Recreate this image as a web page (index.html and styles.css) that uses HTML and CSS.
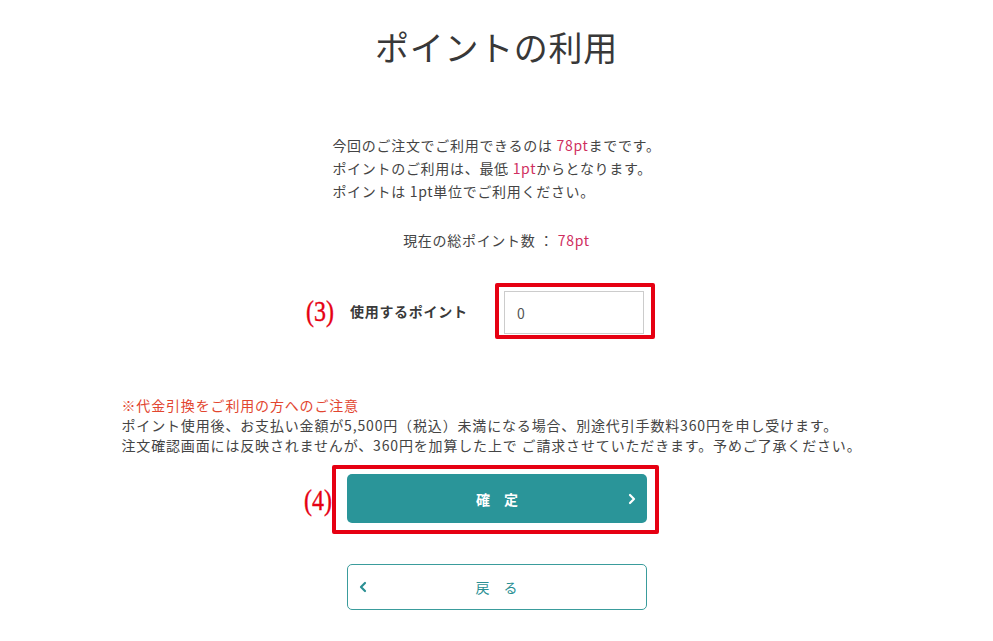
FILE: index.html
```html
<!DOCTYPE html>
<html lang="ja">
<head>
    <meta charset="UTF-8">
    <meta name="viewport" content="width=device-width, initial-scale=1.0">
    <title>ポイントの利用</title>
    <link rel="stylesheet" href="styles.css">
</head>
<body>
    <div class="page">
        <h1>ポイントの利用</h1>

        <div class="intro">
            <p>今回のご注文でご利用できるのは <span class="pt">78pt</span>までです。</p>
            <p>ポイントのご利用は、最低 <span class="pt">1pt</span>からとなります。</p>
            <p>ポイントは 1pt単位でご利用ください。</p>
        </div>

        <p class="total">現在の総ポイント数 ： <span class="pt">78pt</span></p>

        <div class="use-row">
            <label class="use-label" for="use-point">
                <span class="mark mark-3">(3)</span>
                使用するポイント
            </label>
            <div class="frame frame-input">
                <input id="use-point" class="point-input" type="text" value="0">
            </div>
        </div>

        <div class="notice">
            <p class="notice-title">※代金引換をご利用の方へのご注意</p>
            <p>ポイント使用後、お支払い金額が5,500円（税込）未満になる場合、別途代引手数料360円を申し受けます。</p>
            <p>注文確認画面には反映されませんが、360円を加算した上で ご請求させていただきます。予めご了承ください。</p>
        </div>

        <div class="frame frame-button">
            <span class="mark mark-4">(4)</span>
            <button class="btn btn-confirm" type="button">
                <span></span>
                <span class="btn-text">確　定</span>
                <svg class="chev chev-right" width="10" height="12" viewBox="0 0 10 12">
                    <polyline points="3,2 7,6 3,10" fill="none" stroke="#fff" stroke-width="2.2" stroke-linecap="round" stroke-linejoin="round"/>
                </svg>
            </button>
        </div>

        <button class="btn btn-back" type="button">
            <svg class="chev chev-left" width="10" height="12" viewBox="0 0 10 12">
                <polyline points="7,2 3,6 7,10" fill="none" stroke="#2a8f93" stroke-width="2.2" stroke-linecap="round" stroke-linejoin="round"/>
            </svg>
            <span class="btn-text">戻　る</span>
            <span></span>
        </button>
    </div>
</body>
</html>
```

FILE: styles.css
```css
body {
    margin: 0;
    padding: 0;
    background-color: #ffffff;
    font-family: "Noto Sans CJK JP", "Noto Sans", sans-serif;
    color: #444;
    font-size: 14px;
    letter-spacing: 0.05em;
}
p {
    margin: 0;
}
.page {
    width: 750px;
    margin: 0 auto;
}
h1 {
    margin: 27px 0 0;
    font-size: 34px;
    font-weight: 400;
    line-height: 40px;
    letter-spacing: 0.02em;
    text-align: center;
    color: #383838;
}
.pt {
    color: #cf2f5f;
}
.intro {
    width: fit-content;
    margin: 67px auto 0;
    line-height: 23px;
}
.total {
    margin-top: 26px;
    line-height: 23px;
    text-align: center;
}
.use-row {
    display: flex;
    align-items: center;
    justify-content: center;
    margin-top: 31px;
    padding-left: 12px;
}
.use-label {
    position: relative;
    width: 145px;
    font-weight: 700;
    font-size: 14px;
    color: #3a3a3a;
}
.mark {
    position: absolute;
    font-family: "Liberation Serif", serif;
    font-size: 30px;
    font-weight: 400;
    letter-spacing: 0;
    color: #e60012;
    line-height: 32px;
    -webkit-text-stroke: 0.4px #e60012;
}
.mark-3 {
    right: 100%;
    margin-right: 16px;
    top: 50%;
    transform: translateY(-50%) scaleX(0.8);
    transform-origin: right center;
}
.frame {
    border: 4px solid #e60012;
    border-radius: 2px;
}
.frame-input {
    padding: 4px 7px 1px 5px;
}
.point-input {
    display: block;
    box-sizing: border-box;
    width: 140px;
    height: 43px;
    padding: 0 12px;
    border: 1px solid #cccccc;
    font-family: inherit;
    font-size: 14px;
    color: #555;
    outline: none;
}
.notice {
    margin-top: 56px;
    line-height: 20px;
    letter-spacing: 0.06em;
}
.notice-title {
    color: #e2452f;
}
.frame-button {
    position: relative;
    width: fit-content;
    margin: 10px auto 0;
    padding: 5px 8px 7px 11px;
    transform: translateX(-1px);
}
.mark-4 {
    right: 100%;
    margin-right: 4px;
    top: 50%;
    transform: translateY(-50%) scaleX(0.8);
    transform-origin: right center;
}
.btn {
    display: grid;
    grid-template-columns: 1fr auto 1fr;
    align-items: center;
    box-sizing: border-box;
    width: 300px;
    padding: 0 10px;
    border-radius: 5px;
    font-family: inherit;
    font-size: 14px;
    letter-spacing: 0;
    cursor: pointer;
}
.btn-confirm {
    height: 49px;
    border: none;
    background-color: #2a9599;
    color: #ffffff;
    font-weight: 700;
}
.btn-back {
    height: 46px;
    margin: 30px auto 0;
    border: 1px solid #3a9c9c;
    background-color: #ffffff;
    color: #2a8f93;
}
.chev {
    display: block;
}
.chev-right {
    justify-self: end;
}
.chev-left {
    justify-self: start;
}
```
